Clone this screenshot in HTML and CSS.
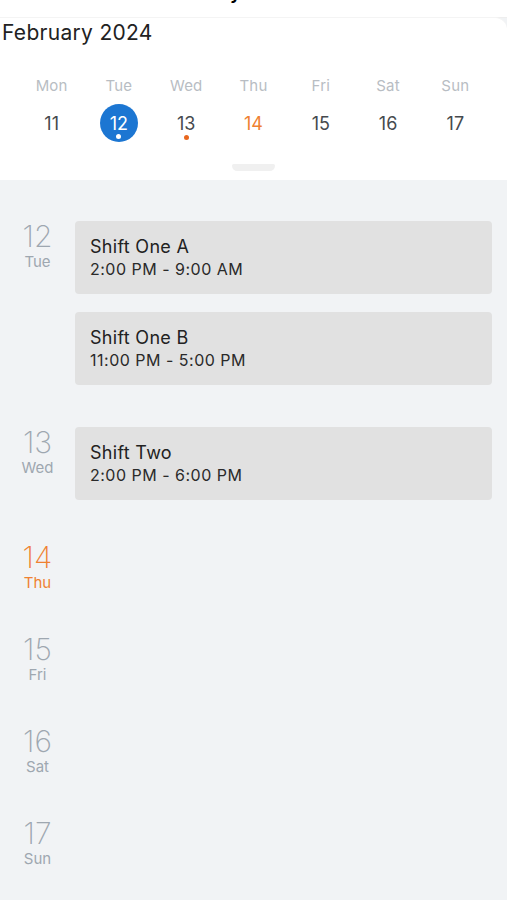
FILE: index.html
```html
<!DOCTYPE html>
<html lang="en">
<head>
<meta charset="utf-8">
<title>Shifts</title>
<link rel="stylesheet" href="styles.css">
</head>
<body>
<header class="topbar"><span class="topbar-title">My Shifts</span></header>
<section class="week-card">
  <h1 class="month">February 2024</h1>
  <div class="week">
    <div class="day"><span class="dow">Mon</span><span class="date">11</span></div>
    <div class="day"><span class="dow">Tue</span><span class="date selected">12<i class="dot dot-white"></i></span></div>
    <div class="day"><span class="dow">Wed</span><span class="date">13<i class="dot dot-orange"></i></span></div>
    <div class="day"><span class="dow">Thu</span><span class="date today">14</span></div>
    <div class="day"><span class="dow">Fri</span><span class="date">15</span></div>
    <div class="day"><span class="dow">Sat</span><span class="date">16</span></div>
    <div class="day"><span class="dow">Sun</span><span class="date">17</span></div>
  </div>
  <div class="handle"></div>
</section>
<main class="agenda">
  <div class="group">
    <div class="daycol"><span class="num">12</span><span class="lbl">Tue</span></div>
    <div class="shifts">
      <div class="shift"><div class="shift-title">Shift One A</div><div class="shift-time">2:00 PM - 9:00 AM</div></div>
      <div class="shift"><div class="shift-title">Shift One B</div><div class="shift-time">11:00 PM - 5:00 PM</div></div>
    </div>
  </div>
  <div class="group">
    <div class="daycol"><span class="num">13</span><span class="lbl">Wed</span></div>
    <div class="shifts">
      <div class="shift"><div class="shift-title">Shift Two</div><div class="shift-time">2:00 PM - 6:00 PM</div></div>
    </div>
  </div>
  <div class="group">
    <div class="daycol today"><span class="num">14</span><span class="lbl">Thu</span></div>
  </div>
  <div class="group">
    <div class="daycol"><span class="num">15</span><span class="lbl">Fri</span></div>
  </div>
  <div class="group">
    <div class="daycol"><span class="num">16</span><span class="lbl">Sat</span></div>
  </div>
  <div class="group">
    <div class="daycol"><span class="num">17</span><span class="lbl">Sun</span></div>
  </div>
</main>
</body>
</html>
```
FILE: styles.css
```css
* { box-sizing: border-box; }
html, body { margin: 0; padding: 0; }
body {
  font-family: Inter, "Liberation Sans", Arial, sans-serif;
  background: #f1f3f5;
  color: #222;
  width: 507px;
  min-height: 900px;
  overflow: hidden;
}
.topbar {
  height: 18px;
  background: #fff;
  border-bottom: 1px solid #eeeeee;
  overflow: hidden;
  display: flex;
  justify-content: center;
}
.topbar-title {
  font-size: 17px;
  font-weight: 700;
  line-height: 17px;
  margin-top: -15px;
  color: #000;
}
.week-card {
  background: #fff;
  border-top-right-radius: 12px;
  height: 162px;
  display: flex;
  flex-direction: column;
  box-shadow: 0 -1px 0 #f4f4f4;
}
.month {
  margin: 0;
  padding: 3px 0 0 2px;
  font-size: 21px;
  font-weight: 400;
  line-height: 24px;
  letter-spacing: 0.3px;
  color: #222;
}
.week {
  display: grid;
  grid-template-columns: repeat(7, 1fr);
  padding: 0 18px;
  margin-top: 32px;
}
.day {
  display: flex;
  flex-direction: column;
  align-items: center;
}
.dow {
  font-size: 15px;
  line-height: 18px;
  color: #b8bdc3;
  letter-spacing: 0.2px;
}
.date {
  position: relative;
  margin-top: 9px;
  width: 38px;
  height: 38px;
  border-radius: 50%;
  display: flex;
  align-items: center;
  justify-content: center;
  font-size: 18px;
  color: #464a4e;
}
.date.selected { background: #1c76d2; color: #fff; }
.date.today { color: #ef8131; }
.dot {
  position: absolute;
  left: 50%;
  bottom: 3px;
  width: 5px;
  height: 5px;
  margin-left: -2.5px;
  border-radius: 50%;
}
.dot-white { background: #fff; }
.dot-orange { background: #e8671f; bottom: 2px; }
.handle {
  align-self: center;
  margin-top: auto;
  width: 43px;
  height: 7px;
  background: #f0f0f0;
  border-radius: 2px 2px 6px 6px;
  margin-bottom: 9px;
}
.agenda {
  padding: 40px 15px 0 0;
  display: flex;
  flex-direction: column;
  gap: 41px;
}
.group {
  display: flex;
  align-items: flex-start;
}
.daycol {
  width: 75px;
  flex: none;
  display: flex;
  flex-direction: column;
  align-items: center;
  color: #9ea7b0;
}
.daycol .num {
  font-size: 30px;
  font-weight: 200;
  line-height: 32px;
}
.daycol .lbl {
  font-size: 15px;
  line-height: 19px;
}
.daycol.today { color: #ef8131; }
.shifts {
  flex: 1;
  display: flex;
  flex-direction: column;
  gap: 18px;
  padding-top: 1px;
}
.shift {
  background: #e1e1e1;
  border-radius: 4px;
  height: 73px;
  padding: 15px 15px 0;
}
.shift-title {
  font-size: 18px;
  line-height: 22px;
  letter-spacing: 0.3px;
  color: #222;
}
.shift-time {
  font-size: 16px;
  line-height: 23px;
  letter-spacing: 0.5px;
  color: #2a2a2a;
}
```
